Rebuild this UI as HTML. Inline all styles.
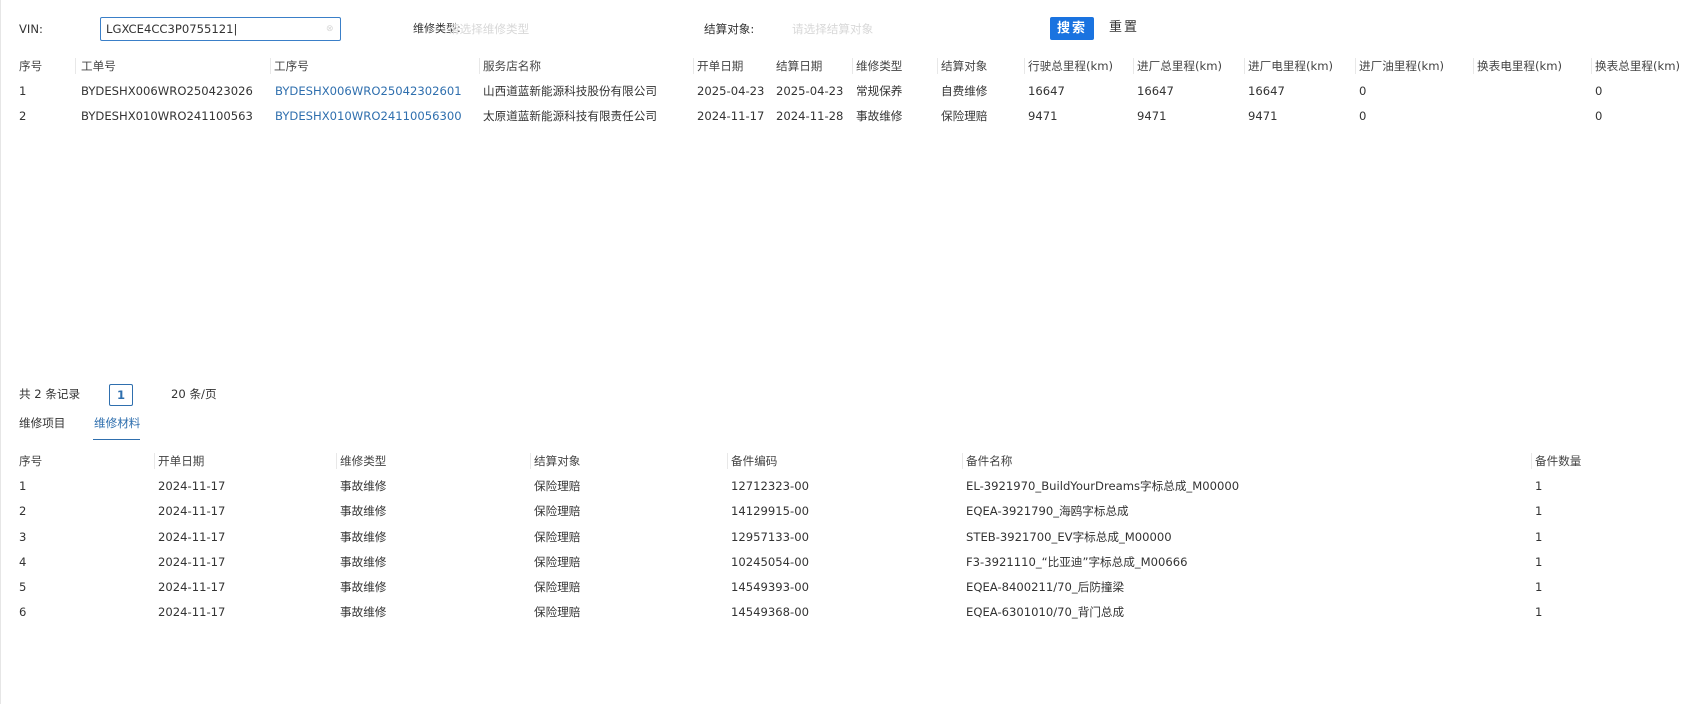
<!DOCTYPE html><html><head><meta charset="utf-8"><style>
body{margin:0;width:1685px;height:704px;background:#fff;font-family:"DejaVu Sans","Noto Sans CJK SC",sans-serif;font-size:11.6px;color:#333;position:relative;overflow:hidden}
.t{position:absolute;white-space:nowrap;line-height:14px}
.g{color:#d8d8d8}.b{color:#2f6fae}.h{color:#444}
.sep{position:absolute;width:1px;height:16px;background:#e8e8e8}
</style></head><body>
<div style="position:absolute;left:0;top:0;width:1px;height:704px;background:#e6e6e6"></div>
<div class="t" style="left:19px;top:22px">VIN:</div>
<div style="position:absolute;left:100px;top:17px;width:239px;height:22px;border:1px solid #3a7fc8;border-radius:2px"></div>
<div class="t" style="left:106px;top:22px">LGXCE4CC3P0755121|</div>
<div class="t g" style="left:326px;top:22px;font-size:9px">⊗</div>
<div class="t" style="left:413px;top:22px;font-size:11px">维修类型:</div>
<div class="t g" style="left:448px;top:22px">请选择维修类型</div>
<div class="t" style="left:704px;top:22px">结算对象:</div>
<div class="t g" style="left:792px;top:22px">请选择结算对象</div>
<div style="position:absolute;left:1050px;top:17px;width:44px;height:23px;background:#1a73e0;border-radius:2px;color:#fff;text-align:center;line-height:23px;font-size:13px;font-weight:bold;letter-spacing:2px">搜索</div>
<div class="t" style="left:1109px;top:21px;font-size:13px;letter-spacing:2px">重置</div>

<div class="t h" style="left:19px;top:59px">序号</div>
<div class="sep" style="left:75px;top:58px"></div><div class="t h" style="left:81px;top:59px">工单号</div>
<div class="sep" style="left:270px;top:58px"></div><div class="t h" style="left:274px;top:59px">工序号</div>
<div class="sep" style="left:479px;top:58px"></div><div class="t h" style="left:483px;top:59px">服务店名称</div>
<div class="sep" style="left:693px;top:58px"></div><div class="t h" style="left:697px;top:59px">开单日期</div>
<div class="t h" style="left:776px;top:59px">结算日期</div>
<div class="sep" style="left:852px;top:58px"></div><div class="t h" style="left:856px;top:59px">维修类型</div>
<div class="sep" style="left:937px;top:58px"></div><div class="t h" style="left:941px;top:59px">结算对象</div>
<div class="sep" style="left:1024px;top:58px"></div><div class="t h" style="left:1028px;top:59px">行驶总里程(km)</div>
<div class="sep" style="left:1133px;top:58px"></div><div class="t h" style="left:1137px;top:59px">进厂总里程(km)</div>
<div class="sep" style="left:1244px;top:58px"></div><div class="t h" style="left:1248px;top:59px">进厂电里程(km)</div>
<div class="sep" style="left:1355px;top:58px"></div><div class="t h" style="left:1359px;top:59px">进厂油里程(km)</div>
<div class="sep" style="left:1473px;top:58px"></div><div class="t h" style="left:1477px;top:59px">换表电里程(km)</div>
<div class="sep" style="left:1591px;top:58px"></div><div class="t h" style="left:1595px;top:59px">换表总里程(km)</div>

<div class="t" style="left:19px;top:84px">1</div><div class="t" style="left:81px;top:84px">BYDESHX006WRO250423026</div><div class="t b" style="left:275px;top:84px">BYDESHX006WRO25042302601</div><div class="t" style="left:483px;top:84px">山西道蓝新能源科技股份有限公司</div><div class="t" style="left:697px;top:84px">2025-04-23</div><div class="t" style="left:776px;top:84px">2025-04-23</div><div class="t" style="left:856px;top:84px">常规保养</div><div class="t" style="left:941px;top:84px">自费维修</div><div class="t" style="left:1028px;top:84px">16647</div><div class="t" style="left:1137px;top:84px">16647</div><div class="t" style="left:1248px;top:84px">16647</div><div class="t" style="left:1359px;top:84px">0</div><div class="t" style="left:1595px;top:84px">0</div>
<div class="t" style="left:19px;top:109px">2</div><div class="t" style="left:81px;top:109px">BYDESHX010WRO241100563</div><div class="t b" style="left:275px;top:109px">BYDESHX010WRO24110056300</div><div class="t" style="left:483px;top:109px">太原道蓝新能源科技有限责任公司</div><div class="t" style="left:697px;top:109px">2024-11-17</div><div class="t" style="left:776px;top:109px">2024-11-28</div><div class="t" style="left:856px;top:109px">事故维修</div><div class="t" style="left:941px;top:109px">保险理赔</div><div class="t" style="left:1028px;top:109px">9471</div><div class="t" style="left:1137px;top:109px">9471</div><div class="t" style="left:1248px;top:109px">9471</div><div class="t" style="left:1359px;top:109px">0</div><div class="t" style="left:1595px;top:109px">0</div>

<div class="t" style="left:19px;top:387px">共 2 条记录</div>
<div style="position:absolute;left:109px;top:384px;width:22px;height:20px;border:1px solid #2f6fae;border-radius:2px;color:#2f6fae;font-weight:bold;text-align:center;line-height:20px">1</div>
<div class="t" style="left:171px;top:387px">20 条/页</div>
<div class="t" style="left:19px;top:416px">维修项目</div>
<div class="t b" style="left:94px;top:416px">维修材料</div>
<div style="position:absolute;left:93px;top:439px;width:47px;height:1px;background:#2f6fae"></div>

<div class="t h" style="left:19px;top:454px">序号</div>
<div class="sep" style="left:154px;top:453px"></div><div class="t h" style="left:158px;top:454px">开单日期</div>
<div class="sep" style="left:336px;top:453px"></div><div class="t h" style="left:340px;top:454px">维修类型</div>
<div class="sep" style="left:530px;top:453px"></div><div class="t h" style="left:534px;top:454px">结算对象</div>
<div class="sep" style="left:727px;top:453px"></div><div class="t h" style="left:731px;top:454px">备件编码</div>
<div class="sep" style="left:962px;top:453px"></div><div class="t h" style="left:966px;top:454px">备件名称</div>
<div class="sep" style="left:1531px;top:453px"></div><div class="t h" style="left:1535px;top:454px">备件数量</div>

<div class="t" style="left:19px;top:479px">1</div><div class="t" style="left:158px;top:479px">2024-11-17</div><div class="t" style="left:340px;top:479px">事故维修</div><div class="t" style="left:534px;top:479px">保险理赔</div><div class="t" style="left:731px;top:479px">12712323-00</div><div class="t" style="left:966px;top:479px">EL-3921970_BuildYourDreams字标总成_M00000</div><div class="t" style="left:1535px;top:479px">1</div>
<div class="t" style="left:19px;top:504px">2</div><div class="t" style="left:158px;top:504px">2024-11-17</div><div class="t" style="left:340px;top:504px">事故维修</div><div class="t" style="left:534px;top:504px">保险理赔</div><div class="t" style="left:731px;top:504px">14129915-00</div><div class="t" style="left:966px;top:504px">EQEA-3921790_海鸥字标总成</div><div class="t" style="left:1535px;top:504px">1</div>
<div class="t" style="left:19px;top:530px">3</div><div class="t" style="left:158px;top:530px">2024-11-17</div><div class="t" style="left:340px;top:530px">事故维修</div><div class="t" style="left:534px;top:530px">保险理赔</div><div class="t" style="left:731px;top:530px">12957133-00</div><div class="t" style="left:966px;top:530px">STEB-3921700_EV字标总成_M00000</div><div class="t" style="left:1535px;top:530px">1</div>
<div class="t" style="left:19px;top:555px">4</div><div class="t" style="left:158px;top:555px">2024-11-17</div><div class="t" style="left:340px;top:555px">事故维修</div><div class="t" style="left:534px;top:555px">保险理赔</div><div class="t" style="left:731px;top:555px">10245054-00</div><div class="t" style="left:966px;top:555px">F3-3921110_“比亚迪”字标总成_M00666</div><div class="t" style="left:1535px;top:555px">1</div>
<div class="t" style="left:19px;top:580px">5</div><div class="t" style="left:158px;top:580px">2024-11-17</div><div class="t" style="left:340px;top:580px">事故维修</div><div class="t" style="left:534px;top:580px">保险理赔</div><div class="t" style="left:731px;top:580px">14549393-00</div><div class="t" style="left:966px;top:580px">EQEA-8400211/70_后防撞梁</div><div class="t" style="left:1535px;top:580px">1</div>
<div class="t" style="left:19px;top:605px">6</div><div class="t" style="left:158px;top:605px">2024-11-17</div><div class="t" style="left:340px;top:605px">事故维修</div><div class="t" style="left:534px;top:605px">保险理赔</div><div class="t" style="left:731px;top:605px">14549368-00</div><div class="t" style="left:966px;top:605px">EQEA-6301010/70_背门总成</div><div class="t" style="left:1535px;top:605px">1</div>
</body></html>
